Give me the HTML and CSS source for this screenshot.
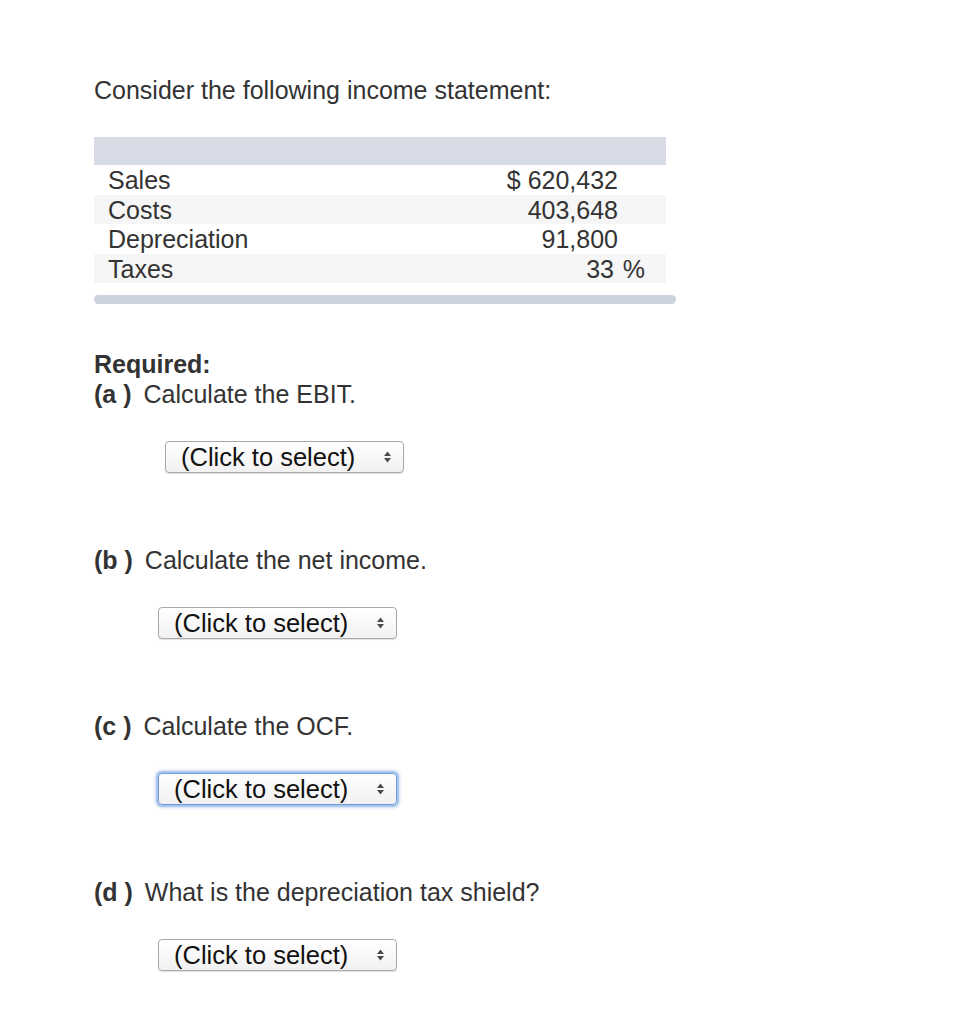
FILE: index.html
```html
<!DOCTYPE html>
<html>
<head>
<meta charset="utf-8">
<link rel="stylesheet" href="styles.css">
</head>
<body>
<div class="page">
  <p class="intro">Consider the following income statement:</p>

  <div class="statement">
    <table class="income">
      <thead>
        <tr><th colspan="3"></th></tr>
      </thead>
      <tbody>
        <tr><td class="label">Sales</td><td class="value">$ 620,432</td><td class="unit"></td></tr>
        <tr class="alt"><td class="label">Costs</td><td class="value">403,648</td><td class="unit"></td></tr>
        <tr><td class="label">Depreciation</td><td class="value">91,800</td><td class="unit"></td></tr>
        <tr class="alt"><td class="label">Taxes</td><td class="value"><span class="pct">33</span></td><td class="unit">%</td></tr>
      </tbody>
    </table>
    <div class="footer-bar"></div>
  </div>

  <div class="required">
    <div class="req-title">Required:</div>
    <div class="question"><b>(a )</b> Calculate the EBIT.</div>
    <div class="answer answer-a">
      <div class="select"><span>(Click to select)</span><svg class="arrows" width="9" height="14" viewBox="0 0 9 14"><path d="M4.5 1.5 L8 6 H1 Z M4.5 12.5 L8 8 H1 Z" fill="#4a4a4a"/></svg></div>
    </div>

    <div class="question"><b>(b )</b> Calculate the net income.</div>
    <div class="answer">
      <div class="select"><span>(Click to select)</span><svg class="arrows" width="9" height="14" viewBox="0 0 9 14"><path d="M4.5 1.5 L8 6 H1 Z M4.5 12.5 L8 8 H1 Z" fill="#4a4a4a"/></svg></div>
    </div>

    <div class="question"><b>(c )</b> Calculate the OCF.</div>
    <div class="answer">
      <div class="select focused"><span>(Click to select)</span><svg class="arrows" width="9" height="14" viewBox="0 0 9 14"><path d="M4.5 1.5 L8 6 H1 Z M4.5 12.5 L8 8 H1 Z" fill="#4a4a4a"/></svg></div>
    </div>

    <div class="question"><b>(d )</b> What is the depreciation tax shield?</div>
    <div class="answer">
      <div class="select"><span>(Click to select)</span><svg class="arrows" width="9" height="14" viewBox="0 0 9 14"><path d="M4.5 1.5 L8 6 H1 Z M4.5 12.5 L8 8 H1 Z" fill="#4a4a4a"/></svg></div>
    </div>
  </div>
</div>
</body>
</html>
```

FILE: styles.css
```css
html, body {
  margin: 0;
  padding: 0;
  background: #ffffff;
}

body {
  font-family: "Liberation Sans", Arial, sans-serif;
  font-size: 25px;
  line-height: 30px;
  color: #333333;
}

.page {
  padding: 75px 0 0 94px;
}

.intro {
  margin: 0;
}

.statement {
  margin-top: 32px;
  width: 582px;
}

.income {
  width: 572px;
  border-collapse: collapse;
  border-spacing: 0;
}

.income th {
  background: #d6dbe6;
  height: 28px;
  padding: 0;
}

.income td {
  height: 29.5px;
  padding: 2px 0 0 0;
  line-height: 27.5px;
  box-sizing: border-box;
}

.income tr.alt td {
  background: #f6f6f6;
}

.income .label {
  padding-left: 14px;
}

.income .value {
  text-align: right;
}

.income .pct {
  padding-right: 4px;
}

.income .unit {
  width: 48px;
  padding-right: 21px;
  text-align: right;
}

.footer-bar {
  margin-top: 12px;
  height: 9px;
  width: 582px;
  border-radius: 5px;
  background: #ccd2de;
}

.required {
  margin-top: 45px;
}

.req-title {
  font-weight: bold;
}

.question b {
  font-weight: bold;
  margin-right: 5px;
}

.answer {
  padding: 32px 0 72px 64px;
}

.answer-a {
  padding-left: 71px;
}

.select {
  box-sizing: border-box;
  width: 239px;
  height: 32px;
  border: 1px solid #a8a8a8;
  border-radius: 4px;
  background: linear-gradient(#ffffff, #f1f1f1);
  display: flex;
  align-items: center;
  justify-content: space-between;
  padding: 0 11px 0 15px;
  color: #111111;
  font-size: 25.5px;
  line-height: 30px;
  box-shadow: 0 1px 1px rgba(0,0,0,0.12);
}

.select.focused {
  border-color: #6e9ad6;
  box-shadow: 0 0 0 2px #a9c6ef, 0 0 3px 3px rgba(110,154,214,0.35);
}

.arrows {
  display: block;
}
```
